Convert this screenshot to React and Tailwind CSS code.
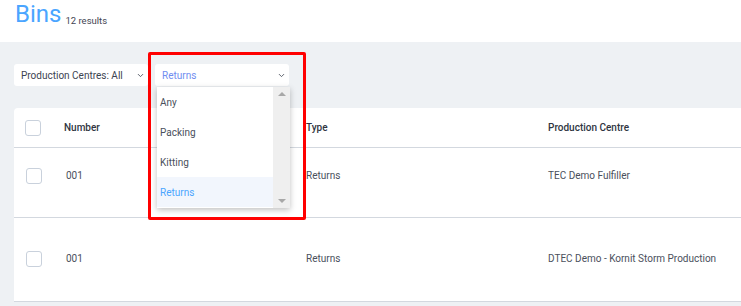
import { ChevronDown } from "lucide-react";

const ROWS = [
  { number: "001", type: "Returns", centre: "TEC Demo Fulfiller", h: "h-[70px] pt-[20px]" },
  { number: "001", type: "Returns", centre: "DTEC Demo - Kornit Storm Production", h: "h-[84px] pt-[33px]" },
];

const OPTIONS = ["Any", "Packing", "Kitting", "Returns"];

function Checkbox() {
  return <div className="w-4 h-4 rounded-[3px] border border-[#c9d1dc] bg-white" />;
}

function Select({ label, active, width }) {
  return (
    <div className={`${width} h-[22px] bg-white rounded-[3px] flex items-center justify-between pl-[7px] pr-[3px]`}>
      <span className={`text-[10px] ${active ? "text-[#6f8cf0]" : "text-[#3c4350]"}`}>{label}</span>
      <ChevronDown size={9} strokeWidth={2.5} className="text-[#555c66]" />
    </div>
  );
}

export default function App() {
  return (
    <div className="w-[741px] h-[306px] overflow-hidden bg-[#eef1f4] relative" style={{ fontFamily: "Roboto, 'Noto Sans', sans-serif" }}>
      <div className="h-[42px] bg-white flex items-end pl-[15px] pb-[16px] gap-[4px]">
        <span className="text-[24px] leading-none text-[#4aa5ff]">Bins</span>
        <span className="text-[9.5px] leading-none text-[#3f4552] mb-[1px]">12 results</span>
      </div>

      <div className="pl-[14px] pt-[22px]">
        <div className="flex gap-[7px]">
          <Select label="Production Centres: All" width="w-[134px]" />
          <Select label="Returns" active width="w-[134px]" />
        </div>

        <div className="mt-[22px] bg-white rounded-tl-[4px] text-[10px] text-[#4a505c]">
          <div className="h-[40px] flex items-center border-b border-[#d3d8df]">
            <div className="w-[50px] pl-[11px]"><Checkbox /></div>
            <div className="w-[242px] font-medium text-[#2f3542]">Number</div>
            <div className="w-[242px] font-medium text-[#2f3542]">Type</div>
            <div className="font-medium text-[#2f3542]">Production Centre</div>
          </div>
          {ROWS.map((r, i) => (
            <div key={i} className={`${r.h} flex items-start border-b border-[#d3d8df]`}>
              <div className="w-[50px] pl-[12px]"><Checkbox /></div>
              <div className="w-[242px] pl-[2px] leading-4">{r.number}</div>
              <div className="w-[242px] leading-4">{r.type}</div>
              <div className="leading-4">{r.centre}</div>
            </div>
          ))}
        </div>
      </div>

      {/* open dropdown */}
      <div className="absolute left-[157px] top-[87px] w-[133px] h-[121px] bg-white flex shadow-[0_2px_6px_rgba(0,0,0,0.25)]">
        <div className="flex-1 flex flex-col">
          {OPTIONS.map((o) => (
            <div
              key={o}
              className={`h-[30px] flex items-center pl-[3px] text-[10px] ${o === "Returns" ? "bg-[#f2f6fd] text-[#4aa5ff]" : "text-[#4a505c]"}`}
            >
              {o}
            </div>
          ))}
        </div>
        <div className="w-[17px] bg-[#efefef] flex flex-col items-center justify-between py-[5px]">
          <div className="w-0 h-0 border-l-[4px] border-r-[4px] border-b-[4px] border-l-transparent border-r-transparent border-b-[#a8a8a8]" />
          <div className="w-0 h-0 border-l-[4px] border-r-[4px] border-t-[4px] border-l-transparent border-r-transparent border-t-[#a8a8a8]" />
        </div>
      </div>

      {/* highlight annotation */}
      <div className="absolute left-[148px] top-[52px] w-[158px] h-[168px] border-[3px] border-[#ff0000] rounded-[2px]" />
    </div>
  );
}
